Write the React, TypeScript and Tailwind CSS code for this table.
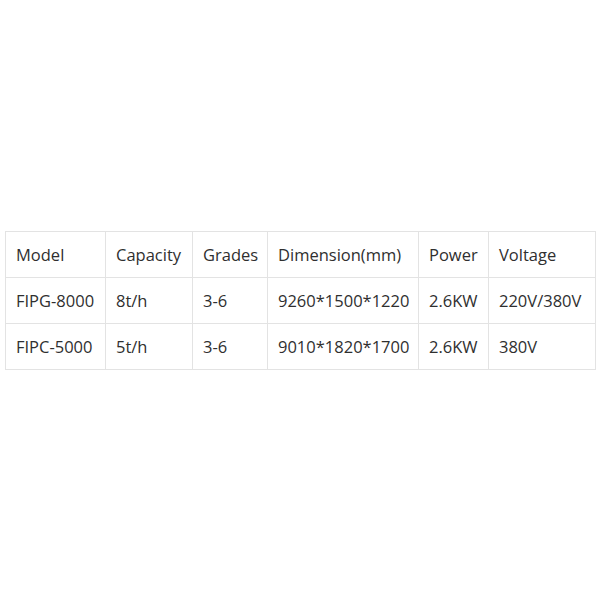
import React from "react";

const headers = ["Model", "Capacity", "Grades", "Dimension(mm)", "Power", "Voltage"];
const rows = [
  ["FIPG-8000", "8t/h", "3-6", "9260*1500*1220", "2.6KW", "220V/380V"],
  ["FIPC-5000", "5t/h", "3-6", "9010*1820*1700", "2.6KW", "380V"],
];

export default function App() {
  return (
    <div
      className="w-[600px] h-[600px] bg-white flex items-start justify-start pt-[231px] pl-[5px]"
      style={{ fontFamily: '"Open Sans", "Noto Sans", sans-serif' }}
    >
      <table className="table-fixed border-collapse w-[590px] text-[#2f2f2f] text-[16.5px]">
        <colgroup>
          <col className="w-[100px]" />
          <col className="w-[87px]" />
          <col className="w-[75px]" />
          <col className="w-[151px]" />
          <col className="w-[70px]" />
          <col className="w-[107px]" />
        </colgroup>
        <tbody>
          {[headers, ...rows].map((r, i) => (
            <tr key={i} className="h-[46px]">
              {r.map((c, j) => (
                <td
                  key={j}
                  className="border border-[#e3e3e3] pl-[10px] pr-0 pt-[2px] align-middle whitespace-nowrap overflow-hidden"
                >
                  {c}
                </td>
              ))}
            </tr>
          ))}
        </tbody>
      </table>
    </div>
  );
}
